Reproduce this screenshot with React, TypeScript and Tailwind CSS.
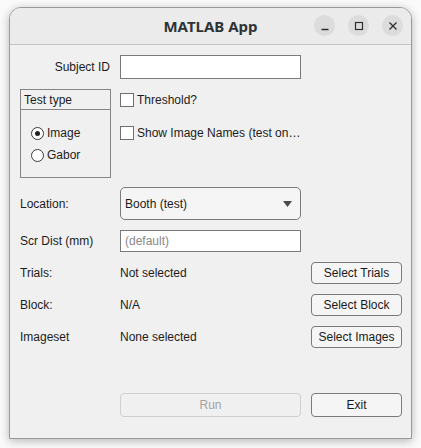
import React from 'react';

// MATLAB App dialog — title bar with window controls, then a form laid out in rows.

const font = { fontFamily: '"Liberation Sans", Arial, sans-serif' };

function WinBtn({ children }: { children: React.ReactNode }) {
  return (
    <span className="grid place-items-center w-[21px] h-[21px] rounded-full bg-[#dcdcdc] text-[#2e2e2e]">
      {children}
    </span>
  );
}

function Check({ label }: { label: string }) {
  return (
    <div className="flex items-center gap-[3px] h-[14px]">
      <span className="w-[14px] h-[14px] border border-[#6f6f6f] bg-white flex-shrink-0" />
      <span className="whitespace-nowrap">{label}</span>
    </div>
  );
}

function Radio({ label, on }: { label: string; on?: boolean }) {
  return (
    <div className="flex items-center gap-[3px] h-[14px]">
      <span className="grid place-items-center w-[13px] h-[13px] rounded-full border border-[#3a3a3a] bg-white">
        {on && <span className="w-[5px] h-[5px] rounded-full bg-[#202020]" />}
      </span>
      <span>{label}</span>
    </div>
  );
}

function Btn({ label, disabled, h = 'h-[22px]', w = 'w-[91px]' }: { label: string; disabled?: boolean; h?: string; w?: string }) {
  return (
    <button
      className={`${w} ${h} rounded-[4px] border text-[12px] flex items-center justify-center ${
        disabled ? 'border-[#cfcfcf] bg-[#f0f0f0] text-[#a3a3a3]' : 'border-[#7a7a7a] bg-[#f5f5f5] text-[#1a1a1a]'
      }`}
      style={font}>
      {label}
    </button>
  );
}

function InfoRow({ label, value, button }: { label: string; value: string; button: string }) {
  return (
    <div className="flex items-center h-[22px] mt-[10px] pl-[10px]">
      <span className="w-[100px]">{label}</span>
      <span className="w-[191px]">{value}</span>
      <Btn label={button} />
    </div>
  );
}

export default function App() {
  return (
    <div className="w-[421px] h-[448px] bg-[#fafafa] pt-[7px] pl-[9px]">
      <div className="w-[403px] h-[432px] rounded-t-[12px] border border-[#9a9a9a] shadow-[0_2px_10px_rgba(0,0,0,0.28)] bg-[#f0f0f0] overflow-hidden flex flex-col">
        {/* Title bar */}
        <div className="relative h-[37px] bg-[#ebebeb] border-b border-[#c4c4c4] flex items-center justify-center flex-shrink-0">
          <span className="text-[15px] font-bold text-[#2e3436]" style={{ fontFamily: '"Noto Sans", "Open Sans", sans-serif' }}>MATLAB App</span>
          <div className="absolute right-[8px] top-[7px] flex gap-[13px]">
            <WinBtn>
              <svg width="10" height="10" viewBox="0 0 10 10"><path d="M1.5 8.5h7" stroke="currentColor" strokeWidth="1.3" /></svg>
            </WinBtn>
            <WinBtn>
              <svg width="10" height="10" viewBox="0 0 10 10"><rect x="1.5" y="1.5" width="7" height="7" fill="none" stroke="currentColor" strokeWidth="1.2" /></svg>
            </WinBtn>
            <WinBtn>
              <svg width="10" height="10" viewBox="0 0 10 10"><path d="M1.5 1.5l7 7M8.5 1.5l-7 7" stroke="currentColor" strokeWidth="1.3" /></svg>
            </WinBtn>
          </div>
        </div>

        {/* Form */}
        <div className="flex-1 flex flex-col text-[12px] text-[#1c1c1c]" style={font}>
          <div className="flex items-center mt-[10px] h-[24px]">
            <span className="w-[100px] text-right">Subject ID</span>
            <span className="ml-[10px] w-[181px] h-[24px] border border-[#7a7a7a] bg-white" />
          </div>

          <div className="flex mt-[10px] pl-[10px]">
            <div className="w-[91px] h-[89px] border border-[#858585] flex flex-col">
              <div className="h-[20px] border-b border-[#858585] pl-[3px] flex items-center">Test type</div>
              <div className="flex flex-col gap-[8px] pl-[10px] pt-[16px]">
                <Radio label="Image" on />
                <Radio label="Gabor" />
              </div>
            </div>
            <div className="ml-[9px] pt-[4px] flex flex-col gap-[19px]">
              <Check label="Threshold?" />
              <Check label="Show Image Names (test on…" />
            </div>
          </div>

          <div className="flex items-center mt-[9px] pl-[10px] h-[33px]">
            <span className="w-[100px]">Location:</span>
            <div className="w-[181px] h-[33px] rounded-[5px] border border-[#7a7a7a] bg-[#f5f5f5] flex items-center pl-[4px] pr-[8px]">
              <span className="flex-1">Booth (test)</span>
              <svg width="9" height="6" viewBox="0 0 9 6"><path d="M0 0h9L4.5 6z" fill="#4a4a4a" /></svg>
            </div>
          </div>

          <div className="flex items-center mt-[10px] pl-[10px] h-[22px]">
            <span className="w-[100px]">Scr Dist (mm)</span>
            <div className="w-[181px] h-[22px] border border-[#7a7a7a] bg-white flex items-center pl-[4px] text-[#8a8a8a]">(default)</div>
          </div>

          <InfoRow label="Trials:" value="Not selected" button="Select Trials" />
          <InfoRow label="Block:" value="N/A" button="Select Block" />
          <InfoRow label="Imageset" value="None selected" button="Select Images" />

          <div className="flex mt-[45px] pl-[110px] gap-[10px]">
            <Btn label="Run" disabled w="w-[181px]" h="h-[24px]" />
            <Btn label="Exit" h="h-[24px]" />
          </div>
        </div>
      </div>
    </div>
  );
}
